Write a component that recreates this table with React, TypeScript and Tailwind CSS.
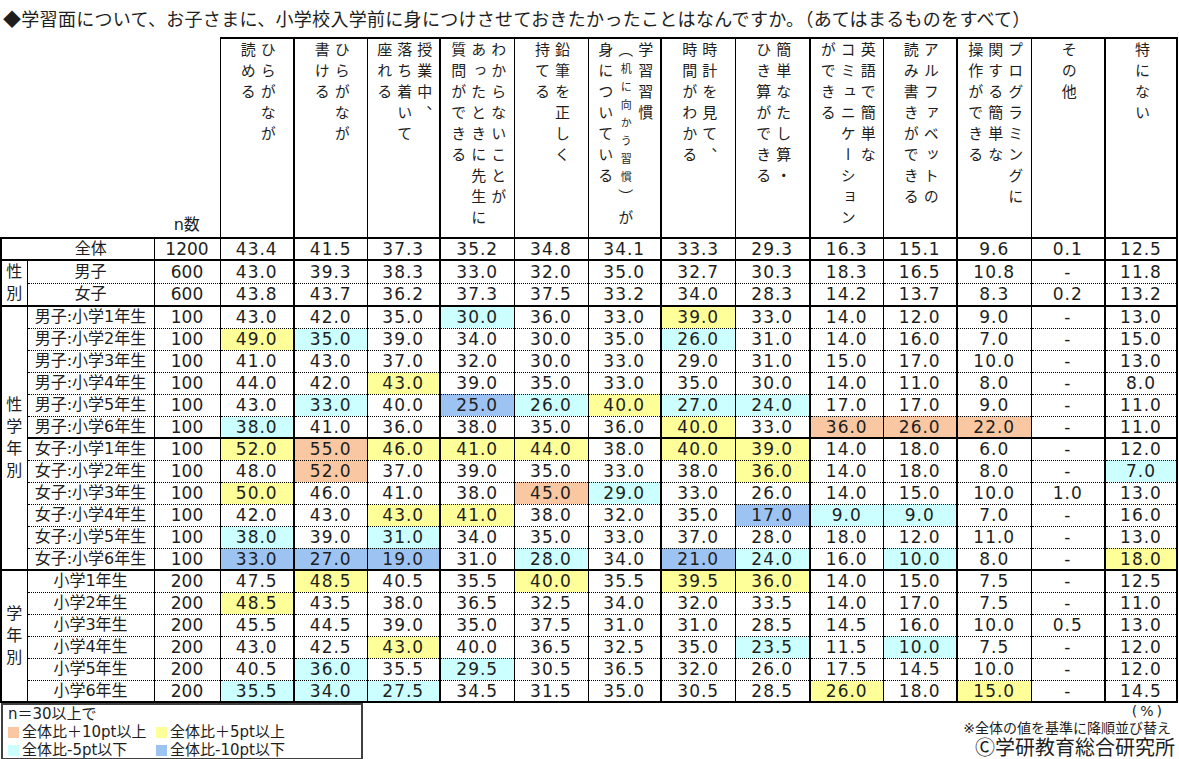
import React from "react";

type Row = { label: string; n: string; d: string; end?: boolean };

const tone: Record<string, string> = {
  o: "bg-[#f9c8a2]",
  y: "bg-[#ffff99]",
  c: "bg-[#ccffff]",
  b: "bg-[#9dc3f3]",
};

const colWidths = [
  "w-[74px]", "w-[73px]", "w-[73px]", "w-[74px]", "w-[74px]", "w-[73px]", "w-[74px]",
  "w-[75px]", "w-[73px]", "w-[74px]", "w-[74px]", "w-[74px]", "w-[72px]",
];

// columns whose right edge is drawn heavier in the original export
const thick = [true, false, true, false, false, true, false, true, false, true, false, true, true];

const heads: React.ReactNode[][] = [
  ["ひらがなが", "読める"],
  ["ひらがなが", "書ける"],
  ["授業中、", "落ち着いて", "座れる"],
  ["わからないことが", "あったときに先生に", "質問ができる"],
  ["鉛筆を正しく", "持てる"],
  [
    "学習習慣",
    <>
      （<span className="text-[11px] tracking-[7px]">机に向かう習慣</span>）が
    </>,
    "身についている",
  ],
  ["時計を見て、", "時間がわかる"],
  ["簡単なたし算・", "ひき算ができる"],
  ["英語で簡単な", "コミュニケーション", "ができる"],
  ["アルファベットの", "読み書きができる"],
  ["プログラミングに", "関する簡単な", "操作ができる"],
  ["その他"],
  ["特にない"],
];

const rows: Row[] = [
  { label: "全体", n: "1200", d: "43.4 41.5 37.3 35.2 34.8 34.1 33.3 29.3 16.3 15.1 9.6 0.1 12.5", end: true },
  { label: "男子", n: "600", d: "43.0 39.3 38.3 33.0 32.0 35.0 32.7 30.3 18.3 16.5 10.8 - 11.8" },
  { label: "女子", n: "600", d: "43.8 43.7 36.2 37.3 37.5 33.2 34.0 28.3 14.2 13.7 8.3 0.2 13.2", end: true },
  { label: "男子:小学1年生", n: "100", d: "43.0 42.0 35.0 30.0c 36.0 33.0 39.0y 33.0 14.0 12.0 9.0 - 13.0" },
  { label: "男子:小学2年生", n: "100", d: "49.0y 35.0c 39.0 34.0 30.0 35.0 26.0c 31.0 14.0 16.0 7.0 - 15.0" },
  { label: "男子:小学3年生", n: "100", d: "41.0 43.0 37.0 32.0 30.0 33.0 29.0 31.0 15.0 17.0 10.0 - 13.0" },
  { label: "男子:小学4年生", n: "100", d: "44.0 42.0 43.0y 39.0 35.0 33.0 35.0 30.0 14.0 11.0 8.0 - 8.0" },
  { label: "男子:小学5年生", n: "100", d: "43.0 33.0c 40.0 25.0b 26.0c 40.0y 27.0c 24.0c 17.0 17.0 9.0 - 11.0" },
  { label: "男子:小学6年生", n: "100", d: "38.0c 41.0 36.0 38.0 35.0 36.0 40.0y 33.0 36.0o 26.0o 22.0o - 11.0", end: true },
  { label: "女子:小学1年生", n: "100", d: "52.0y 55.0o 46.0y 41.0y 44.0y 38.0 40.0y 39.0y 14.0 18.0 6.0 - 12.0" },
  { label: "女子:小学2年生", n: "100", d: "48.0 52.0o 37.0 39.0 35.0 33.0 38.0 36.0y 14.0 18.0 8.0 - 7.0c" },
  { label: "女子:小学3年生", n: "100", d: "50.0y 46.0 41.0 38.0 45.0o 29.0c 33.0 26.0 14.0 15.0 10.0 1.0 13.0" },
  { label: "女子:小学4年生", n: "100", d: "42.0 43.0 43.0y 41.0y 38.0 32.0 35.0 17.0b 9.0c 9.0c 7.0 - 16.0" },
  { label: "女子:小学5年生", n: "100", d: "38.0c 39.0 31.0c 34.0 35.0 33.0 37.0 28.0 18.0 12.0 11.0 - 13.0" },
  { label: "女子:小学6年生", n: "100", d: "33.0b 27.0b 19.0b 31.0 28.0c 34.0 21.0b 24.0c 16.0 10.0c 8.0 - 18.0y", end: true },
  { label: "小学1年生", n: "200", d: "47.5 48.5y 40.5 35.5 40.0y 35.5 39.5y 36.0y 14.0 15.0 7.5 - 12.5" },
  { label: "小学2年生", n: "200", d: "48.5y 43.5 38.0 36.5 32.5 34.0 32.0 33.5 14.0 17.0 7.5 - 11.0" },
  { label: "小学3年生", n: "200", d: "45.5 44.5 39.0 35.0 37.5 31.0 31.0 28.5 14.5 16.0 10.0 0.5 13.0" },
  { label: "小学4年生", n: "200", d: "43.0 42.5 43.0y 40.0 36.5 32.5 35.0 23.5c 11.5 10.0c 7.5 - 12.0" },
  { label: "小学5年生", n: "200", d: "40.5 36.0c 35.5 29.5c 30.5 36.5 32.0 26.0 17.5 14.5 10.0 - 12.0" },
  { label: "小学6年生", n: "200", d: "35.5c 34.0c 27.5c 34.5 31.5 35.0 30.5 28.5 26.0y 18.0 15.0y - 14.5", end: true },
];

const groups: Record<number, { name: string; span: number }> = {
  1: { name: "性別", span: 2 },
  3: { name: "性学年別", span: 12 },
  15: { name: "学年別", span: 6 },
};

function parse(d: string) {
  return d.split(" ").map((t) => {
    const m = t.match(/^([\d.\-]+)([oycb]?)$/);
    return { v: m ? m[1] : t, t: m ? m[2] : "" };
  });
}

// Verdana-like latin first (matches the Meiryo digits), CJK falls through to Noto
const mixed = "font-['DejaVu_Sans','Noto_Sans_CJK_JP',sans-serif]";

function HeadText({ lines }: { lines: React.ReactNode[] }) {
  return (
    <div className="flex justify-center pt-[3px]">
      <div className={`[writing-mode:vertical-rl] text-start text-[15px] leading-[20px] tracking-[6px] ${mixed}`}>
        {lines.map((l, i) => (
          <div key={i} className="text-start">
            {l}
          </div>
        ))}
      </div>
    </div>
  );
}

export default function App() {
  return (
    <div className="w-[1179px] h-[759px] overflow-hidden bg-white text-[#1e1e1e] font-['Noto_Sans_CJK_JP',sans-serif]">
      <div className="h-[37px] pl-[3px] text-[18px] leading-[36px] tracking-[0.3px] whitespace-nowrap">
        ◆学習面について、お子さまに、小学校入学前に身につけさせておきたかったことはなんですか。（あてはまるものをすべて）
      </div>

      <table className="table-fixed border-collapse w-[1176px]">
        <colgroup>
          <col className="w-[26px]" />
          <col className="w-[127px]" />
          <col className="w-[66px]" />
          {colWidths.map((w, i) => (
            <col key={i} className={w} />
          ))}
        </colgroup>
        <thead>
          <tr className="h-[200px]">
            <td colSpan={2} className="p-0" />
            <td className={`p-0 pb-[1px] align-bottom text-center text-[16px] leading-[22px] ${mixed}`}>n数</td>
            {heads.map((h, i) => (
              <th
                key={i}
                className={`p-0 align-top font-normal text-start border-t-2 border-l border-black ${
                  thick[i] ? "border-r-2" : "border-r"
                }`}
              >
                <HeadText lines={h} />
              </th>
            ))}
          </tr>
        </thead>
        <tbody>
          {rows.map((r, ri) => {
            const bottom = r.end
              ? "border-b-2 border-black"
              : "border-b border-black [border-bottom-style:dotted]!";
            const g = groups[ri];
            return (
              <tr key={ri} className="h-[22px]">
                {ri === 0 ? (
                  <td
                    colSpan={2}
                    className={`p-0 pl-[26px] text-center text-[16px] leading-[20px] border-l-2 border-t-2 border-r border-black ${mixed} ${bottom}`}
                  >
                    {r.label}
                  </td>
                ) : (
                  <>
                    {g && (
                      <td
                        rowSpan={g.span}
                        className="p-0 align-middle border-l-2 border-b-2 border-r border-black"
                      >
                        <div className={`flex flex-col items-center text-[16px] leading-[22px] ${mixed}`}>
                          {g.name.split("").map((c, i) => (
                            <span key={i}>{c}</span>
                          ))}
                        </div>
                      </td>
                    )}
                    <td
                      className={`p-0 text-center text-[16px] leading-[20px] whitespace-nowrap border-r border-black ${mixed} ${bottom}`}
                    >
                      {r.label}
                    </td>
                  </>
                )}
                <td
                  className={`p-0 text-center text-[17px] leading-[20px] font-['DejaVu_Sans',sans-serif] border-r border-black ${
                    ri === 0 ? "border-t-2" : ""
                  } ${bottom}`}
                >
                  {r.n}
                </td>
                {parse(r.d).map((c, ci) => (
                  <td
                    key={ci}
                    className={`p-0 text-center text-[17px] leading-[20px] tracking-[1px] font-['DejaVu_Sans',sans-serif] border-black ${
                      thick[ci] ? "border-r-2" : "border-r"
                    } ${ri === 0 ? "border-t-2" : ""} ${bottom} ${c.t ? tone[c.t] : ""}`}
                  >
                    {c.v}
                  </td>
                ))}
              </tr>
            );
          })}
        </tbody>
      </table>

      <div className="flex justify-between">
        <div
          className={`ml-[1px] w-[362px] h-[57px] border-2 border-[#404040] px-[5px] text-[15px] leading-[18px] whitespace-nowrap ${mixed}`}
        >
          <div>n＝30以上で</div>
          <div className="flex">
            <div className="w-[148px] flex items-center">
              <span className="inline-block w-[11px] h-[11px] mr-[3px] bg-[#f9c8a2]" />
              全体比＋10pt以上
            </div>
            <div className="flex items-center">
              <span className="inline-block w-[11px] h-[11px] mr-[3px] bg-[#ffff99]" />
              全体比＋5pt以上
            </div>
          </div>
          <div className="flex">
            <div className="w-[148px] flex items-center">
              <span className="inline-block w-[11px] h-[11px] mr-[3px] bg-[#ccffff]" />
              全体比-5pt以下
            </div>
            <div className="flex items-center">
              <span className="inline-block w-[11px] h-[11px] mr-[3px] bg-[#9dc3f3]" />
              全体比-10pt以下
            </div>
          </div>
        </div>
        <div className={`flex flex-col items-end whitespace-nowrap ${mixed}`}>
          <div className="mr-[14px] text-[14px] leading-[17px] tracking-[3px]">(%)</div>
          <div className="mr-[8px] text-[14px] leading-[17px]">※全体の値を基準に降順並び替え</div>
          <div className="mr-[4px] text-[20px] leading-[22px]">Ⓒ学研教育総合研究所</div>
        </div>
      </div>
    </div>
  );
}
